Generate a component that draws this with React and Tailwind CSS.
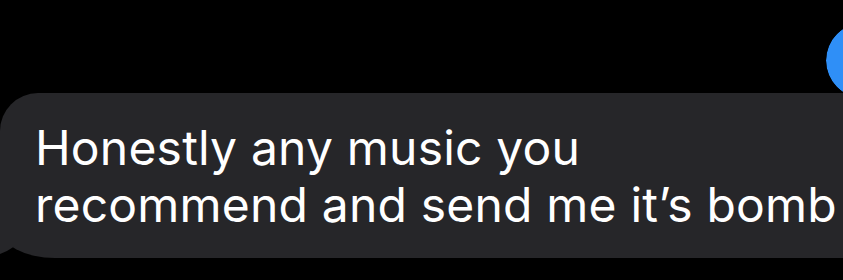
// Dark iMessage thread snippet: outgoing bubble edge + incoming grey bubble

const App = () => {
  return (
    <div className="w-[843px] h-[280px] bg-black overflow-hidden flex flex-col pt-[23px]">

      {/* OUTGOING (BLUE) BUBBLE, mostly off screen */}
      <div className="self-end mr-[-63px] w-[80px] h-[75px] rounded-full bg-[#2f8ff7] relative z-10 outline outline-1 outline-black" />

      {/* INCOMING BUBBLE */}
      <div className="relative mt-[-5px] w-[882px] h-[165px] bg-[#262629] rounded-tl-[38px] rounded-tr-[38px] rounded-br-[38px] rounded-bl-[55px_30px] pt-[26px] pl-[35px]">
        <p className="text-white text-[48px] leading-[57px] tracking-[0.2px] font-['Inter',sans-serif]">
          Honestly any music you
          <br />
          recommend and send me it’s bomb
        </p>

        {/* TAIL */}
        <svg className="absolute left-0 bottom-[4px]" width="20" height="30" viewBox="0 0 20 30">
          <path d="M0 0 H15 V22 Q8 27 0 30 Z" fill="#262629" />
        </svg>
      </div>
    </div>
  );
};

export default App;
